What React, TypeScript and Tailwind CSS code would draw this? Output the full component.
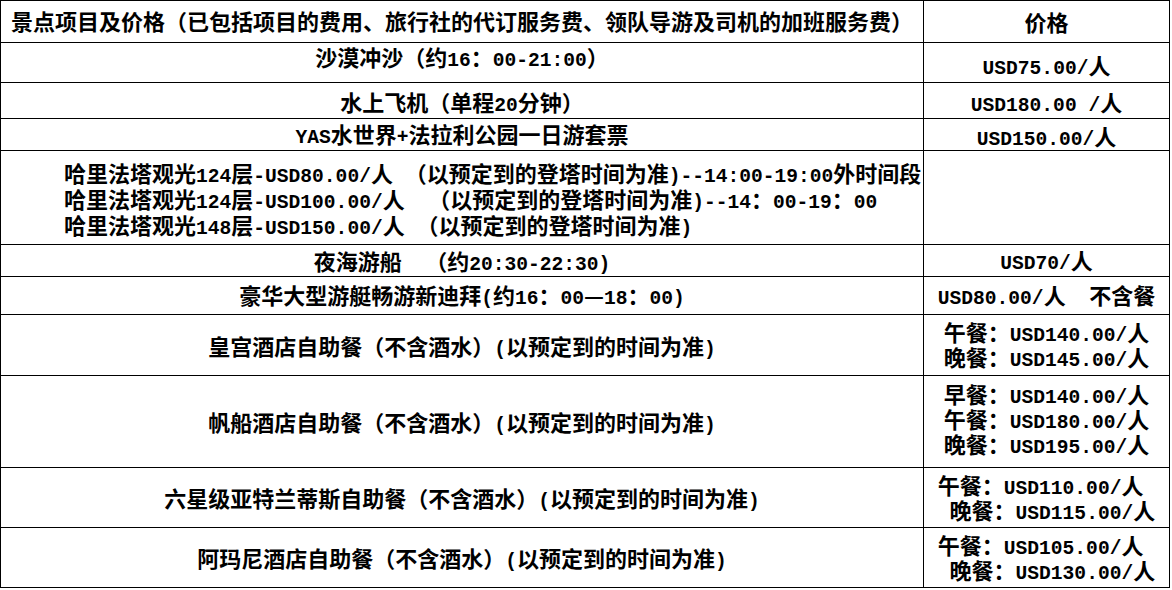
import React from "react";

function T({ s }: { s: string }) {
  const parts = s.split(/([\x20-\x7e]+)/).filter((p) => p.length > 0);
  return (
    <>
      {parts.map((p, i) =>
        /^[\x20-\x7e]+$/.test(p) ? (
          <span key={i} className="inline-block font-['Liberation_Mono',monospace] text-[19.6px] leading-[16px] font-bold">
            {p}
          </span>
        ) : (
          <span key={i} className="inline-block">
            {p}
          </span>
        )
      )}
    </>
  );
}

function L({ s, extra = "" }: { s: string; extra?: string }) {
  return (
    <div className={"flex items-center justify-center border-r border-b border-black whitespace-pre " + extra}>
      <div>
        <T s={s} />
      </div>
    </div>
  );
}

function R({ lines, extra = "" }: { lines: string[]; extra?: string }) {
  return (
    <div className={"flex items-center justify-center border-r border-b border-black whitespace-pre " + extra}>
      <div className="flex flex-col items-start">
        {lines.map((l, i) => (
          <div key={i}>
            <T s={l} />
          </div>
        ))}
      </div>
    </div>
  );
}

export default function App() {
  return (
    <div className="bg-white w-[1172px] h-[590px] font-['Noto_Sans_CJK_SC','Noto_Sans_CJK_JP',sans-serif] text-[22px] leading-[25px] font-bold text-black">
      <div className="w-[1170px] border-t border-l border-black grid grid-cols-[923px_246px] grid-rows-[42px_40px_36px_32px_94px_32px_38px_61px_92px_60px_60px]">
        <div className="flex items-center justify-start pl-[10px] pb-[2px] border-r border-b border-black whitespace-pre">
          <div>
            <T s="景点项目及价格（已包括项目的费用、旅行社的代订服务费、领队导游及司机的加班服务费）" />
          </div>
        </div>
        <R lines={["价格"]} extra="pb-[1px]" />

        <L s="沙漠冲沙（约16：00-21:00）" extra="pb-[12px]" />
        <R lines={["USD75.00/人"]} extra="pt-[3px]" />

        <L s="水上飞机（单程20分钟）" extra="pt-[1px]" />
        <R lines={["USD180.00 /人"]} extra="pt-[2px]" />

        <L s="YAS水世界+法拉利公园一日游套票" extra="pb-[2px]" />
        <R lines={["USD150.00/人"]} extra="pt-[2px]" />

        <div className="flex flex-col justify-center items-start pl-[63px] border-r border-b border-black whitespace-pre leading-[26px]">
          <div>
            <T s="哈里法塔观光124层-USD80.00/人 （以预定到的登塔时间为准)--14:00-19:00外时间段" />
          </div>
          <div>
            <T s="哈里法塔观光124层-USD100.00/人  （以预定到的登塔时间为准)--14：00-19：00" />
          </div>
          <div>
            <T s="哈里法塔观光148层-USD150.00/人 （以预定到的登塔时间为准)" />
          </div>
        </div>
        <div className="border-r border-b border-black" />

        <L s="夜海游船  （约20:30-22:30)" extra="pb-[1px]" />
        <R lines={["USD70/人"]} extra="pb-[2px]" />

        <L s="豪华大型游艇畅游新迪拜(约16：00—18：00)" extra="pb-[2px]" />
        <R lines={["USD80.00/人  不含餐"]} extra="pb-[2px]" />

        <L s="皇宫酒店自助餐（不含酒水）(以预定到的时间为准)" />
        <R lines={["午餐：USD140.00/人", "晚餐：USD145.00/人"]} extra="pb-[3px]" />

        <L s="帆船酒店自助餐（不含酒水）(以预定到的时间为准)" />
        <R lines={["早餐：USD140.00/人", "午餐：USD180.00/人", "晚餐：USD195.00/人"]} extra="pb-[6px]" />

        <L s="六星级亚特兰蒂斯自助餐（不含酒水）(以预定到的时间为准)" />
        <R lines={["午餐：USD110.00/人", " 晚餐：USD115.00/人"]} extra="pb-[2px]" />

        <L s="阿玛尼酒店自助餐（不含酒水）(以预定到的时间为准)" />
        <R lines={["午餐：USD105.00/人", " 晚餐：USD130.00/人"]} extra="pb-[2px]" />
      </div>
    </div>
  );
}
